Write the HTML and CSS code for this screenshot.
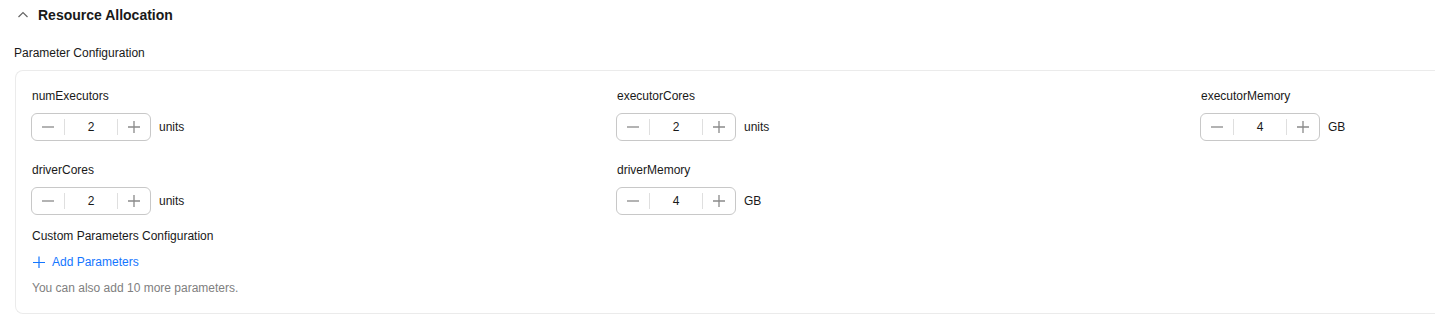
FILE: index.html
```html
<!DOCTYPE html>
<html lang="en">
<head>
    <meta charset="UTF-8">
    <meta name="viewport" content="width=device-width, initial-scale=1.0">
    <title>Resource Allocation</title>
    <link rel="stylesheet" href="styles.css">
</head>
<body>
    <div class="page">
        <!-- Collapsible section header -->
        <div class="section-header">
            <svg class="chevron" width="12" height="12" viewBox="0 0 12 12">
                <path d="M1.5 8 L6 3.5 L10.5 8" fill="none" stroke="#666" stroke-width="1.2"/>
            </svg>
            <span class="section-title">Resource Allocation</span>
        </div>

        <div class="group-label">Parameter Configuration</div>

        <div class="card">
            <div class="param-grid">
                <div class="form-item">
                    <label>numExecutors</label>
                    <div class="stepper-row">
                        <div class="stepper">
                            <button class="step-btn"><svg width="12" height="12" viewBox="0 0 12 12"><path d="M0 6 H12" stroke="#8a8a8a" stroke-width="1.3"/></svg></button>
                            <span class="step-value">2</span>
                            <button class="step-btn"><svg width="12" height="12" viewBox="0 0 12 12"><path d="M0 6 H12 M6 0 V12" stroke="#8a8a8a" stroke-width="1.3"/></svg></button>
                        </div>
                        <span class="unit">units</span>
                    </div>
                </div>

                <div class="form-item">
                    <label>executorCores</label>
                    <div class="stepper-row">
                        <div class="stepper">
                            <button class="step-btn"><svg width="12" height="12" viewBox="0 0 12 12"><path d="M0 6 H12" stroke="#8a8a8a" stroke-width="1.3"/></svg></button>
                            <span class="step-value">2</span>
                            <button class="step-btn"><svg width="12" height="12" viewBox="0 0 12 12"><path d="M0 6 H12 M6 0 V12" stroke="#8a8a8a" stroke-width="1.3"/></svg></button>
                        </div>
                        <span class="unit">units</span>
                    </div>
                </div>

                <div class="form-item">
                    <label>executorMemory</label>
                    <div class="stepper-row">
                        <div class="stepper">
                            <button class="step-btn"><svg width="12" height="12" viewBox="0 0 12 12"><path d="M0 6 H12" stroke="#8a8a8a" stroke-width="1.3"/></svg></button>
                            <span class="step-value">4</span>
                            <button class="step-btn"><svg width="12" height="12" viewBox="0 0 12 12"><path d="M0 6 H12 M6 0 V12" stroke="#8a8a8a" stroke-width="1.3"/></svg></button>
                        </div>
                        <span class="unit">GB</span>
                    </div>
                </div>

                <div class="form-item">
                    <label>driverCores</label>
                    <div class="stepper-row">
                        <div class="stepper">
                            <button class="step-btn"><svg width="12" height="12" viewBox="0 0 12 12"><path d="M0 6 H12" stroke="#8a8a8a" stroke-width="1.3"/></svg></button>
                            <span class="step-value">2</span>
                            <button class="step-btn"><svg width="12" height="12" viewBox="0 0 12 12"><path d="M0 6 H12 M6 0 V12" stroke="#8a8a8a" stroke-width="1.3"/></svg></button>
                        </div>
                        <span class="unit">units</span>
                    </div>
                </div>

                <div class="form-item">
                    <label>driverMemory</label>
                    <div class="stepper-row">
                        <div class="stepper">
                            <button class="step-btn"><svg width="12" height="12" viewBox="0 0 12 12"><path d="M0 6 H12" stroke="#8a8a8a" stroke-width="1.3"/></svg></button>
                            <span class="step-value">4</span>
                            <button class="step-btn"><svg width="12" height="12" viewBox="0 0 12 12"><path d="M0 6 H12 M6 0 V12" stroke="#8a8a8a" stroke-width="1.3"/></svg></button>
                        </div>
                        <span class="unit">GB</span>
                    </div>
                </div>
            </div>

            <!-- Custom parameters -->
            <div class="custom-title">Custom Parameters Configuration</div>
            <a class="add-link" href="#">
                <svg width="12" height="12" viewBox="0 0 12 12"><path d="M0 6.5 H12 M6 0.5 V12.5" stroke="#1476ff" stroke-width="1.2"/></svg>
                Add Parameters
            </a>
            <div class="hint">You can also add 10 more parameters.</div>
        </div>
    </div>
</body>
</html>
```

FILE: styles.css
```css
body {
    margin: 0;
    font-family: "Liberation Sans", Arial, sans-serif;
    font-size: 12px;
    color: #191919;
    background: #fff;
}

.page {
    padding-left: 14px;
}

.section-header {
    display: flex;
    align-items: center;
    height: 30px;
    padding-left: 3px;
    gap: 9px;
}

.chevron {
    display: block;
}

.section-title {
    font-size: 14px;
    font-weight: bold;
    color: #191919;
}

.group-label {
    line-height: 18px;
    margin: 14px 0 8px;
}

.card {
    margin-left: 1px;
    padding: 16px 15px 16px;
    border: 1px solid #ebebeb;
    border-right: none;
    border-radius: 8px 0 0 8px;
}

.param-grid {
    display: grid;
    grid-template-columns: 585px 584px auto;
    row-gap: 20px;
}

.form-item label {
    display: block;
    line-height: 18px;
    margin-bottom: 8px;
    padding-left: 1px;
}

.stepper-row {
    display: flex;
    align-items: center;
    gap: 8px;
}

.stepper {
    display: flex;
    align-items: center;
    width: 120px;
    height: 28px;
    box-sizing: border-box;
    border: 1px solid #c8c8c8;
    border-radius: 6px;
}

.step-btn {
    display: flex;
    align-items: center;
    justify-content: center;
    width: 32px;
    height: 100%;
    padding: 0;
    border: none;
    background: none;
    cursor: pointer;
}

.step-btn svg {
    display: block;
}

.step-value {
    flex: 1;
    text-align: center;
    height: 16px;
    line-height: 16px;
    border-left: 1px solid #dfdfdf;
    border-right: 1px solid #dfdfdf;
}

.custom-title {
    line-height: 18px;
    margin-top: 12px;
    padding-left: 1px;
}

.add-link {
    display: flex;
    align-items: center;
    gap: 7px;
    margin-top: 8px;
    padding-left: 2px;
    line-height: 18px;
    color: #1476ff;
    text-decoration: none;
}

.hint {
    line-height: 18px;
    margin-top: 8px;
    padding-left: 1px;
    color: #808080;
}
```
